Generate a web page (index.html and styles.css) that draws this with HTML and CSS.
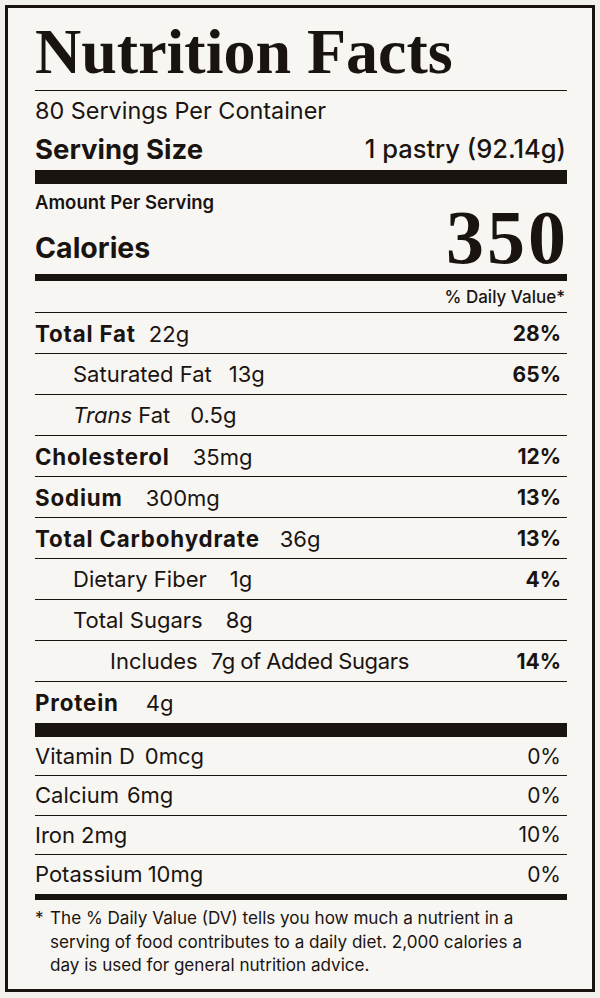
FILE: index.html
```html
<!DOCTYPE html>
<html lang="en">
<head>
<meta charset="utf-8">
<title>Nutrition Facts</title>
<link rel="stylesheet" href="styles.css">
</head>
<body>
<div class="label">
  <h1 class="title">Nutrition Facts</h1>
  <div class="servings">80 Servings Per Container</div>
  <div class="size"><span class="size-label">Serving Size</span><span class="size-value">1 pastry (92.14g)</span></div>
  <div class="calblock">
    <div class="calleft">
      <div class="amount">Amount Per Serving</div>
      <div class="calories">Calories</div>
    </div>
    <div class="calnum">350</div>
  </div>
  <div class="dvhead">% Daily Value*</div>

  <div class="row"><span class="name"><b>Total Fat</b><span class="amt gap-s">22g</span></span><b class="pct">28%</b></div>
  <div class="row sub"><span class="name">Saturated Fat<span class="amt gap-s2">13g</span></span><b class="pct">65%</b></div>
  <div class="row sub"><span class="name"><i>Trans</i>&nbsp;Fat<span class="amt gap-m">0.5g</span></span></div>
  <div class="row"><span class="name"><b>Cholesterol</b><span class="amt gap-l">35mg</span></span><b class="pct">12%</b></div>
  <div class="row"><span class="name"><b>Sodium</b><span class="amt gap-l">300mg</span></span><b class="pct">13%</b></div>
  <div class="row"><span class="name"><b>Total Carbohydrate</b><span class="amt gap-m">36g</span></span><b class="pct">13%</b></div>
  <div class="row sub"><span class="name">Dietary Fiber<span class="amt gap-l">1g</span></span><b class="pct">4%</b></div>
  <div class="row sub"><span class="name">Total Sugars<span class="amt gap-l">8g</span></span></div>
  <div class="row subsub"><span class="name">Includes<span class="amt gap-s tight">7g of Added Sugars</span></span><b class="pct">14%</b></div>
  <div class="row protein"><span class="name"><b>Protein</b><span class="amt gap-xl">4g</span></span></div>

  <div class="row vit"><span class="name">Vitamin D<span class="amt gap-xs">0mcg</span></span><span class="pct">0%</span></div>
  <div class="row vit"><span class="name">Calcium<span class="amt gap-sm">6mg</span></span><span class="pct">0%</span></div>
  <div class="row vit"><span class="name">Iron<span class="amt gap-xxs">2mg</span></span><span class="pct">10%</span></div>
  <div class="row vit last"><span class="name">Potassium<span class="amt gap-xxxs">10mg</span></span><span class="pct">0%</span></div>

  <div class="foot">
    <span class="star">*</span>
    <p class="foottext">The % Daily Value (DV) tells you how much a nutrient in a serving of food contributes to a daily diet. 2,000 calories a day is used for general nutrition advice.</p>
  </div>
</div>
</body>
</html>
```

FILE: styles.css
```css
* { box-sizing: border-box; }

html, body {
  margin: 0;
  padding: 0;
  background: #f3f1ed;
}

body {
  padding: 5px;
  color: #1a1411;
  font-family: Inter, "Noto Sans", sans-serif;
}

.label {
  width: 590px;
  height: 987px;
  border: 3px solid #1a1411;
  background: #f8f6f2;
  padding: 0 25px 0 27px;
  display: flex;
  flex-direction: column;
}

.title {
  margin: 0;
  padding: 12px 0 6px;
  font-family: "Liberation Serif", "Times New Roman", serif;
  font-weight: 700;
  font-size: 64px;
  line-height: 64px;
  border-bottom: 1px solid #1a1411;
}

.servings {
  height: 38px;
  display: flex;
  align-items: center;
  font-size: 23.4px;
  font-weight: 400;
}

.size {
  height: 55px;
  display: flex;
  justify-content: space-between;
  align-items: center;
  padding-bottom: 2px;
  border-bottom: 14px solid #1a1411;
}

.size-label {
  font-size: 27.5px;
  font-weight: 700;
}

.size-value {
  font-size: 25.5px;
  font-weight: 500;
  padding-right: 1px;
}

.calblock {
  height: 97px;
  display: flex;
  justify-content: space-between;
  align-items: flex-end;
  border-bottom: 7px solid #1a1411;
}

.calleft {
  display: flex;
  flex-direction: column;
}

.amount {
  height: 36px;
  display: flex;
  align-items: center;
  font-size: 18.5px;
  font-weight: 600;
}

.calories {
  height: 54px;
  display: flex;
  align-items: center;
  font-size: 28.5px;
  font-weight: 700;
}

.calnum {
  font-family: "Liberation Serif", "Times New Roman", serif;
  font-weight: 700;
  font-size: 76px;
  line-height: 60px;
  padding-bottom: 7px;
  letter-spacing: 3px;
  margin-right: -2px;
}

.dvhead {
  height: 32px;
  display: flex;
  justify-content: flex-end;
  align-items: center;
  padding-right: 2px;
  border-bottom: 1px solid #1a1411;
  font-size: 17px;
  font-weight: 500;
}

.row {
  height: 41px;
  display: flex;
  justify-content: space-between;
  align-items: center;
  border-bottom: 1px solid #1a1411;
  font-size: 22px;
}

.row b {
  font-weight: 700;
  font-size: 22.3px;
  letter-spacing: 0.85px;
}

.row .pct {
  font-size: 21px;
  letter-spacing: 0;
}

.name { display: flex; align-items: baseline; }

.amt { font-weight: 400; }
.tight { letter-spacing: -0.35px; word-spacing: -0.5px; }
.gap-xxxs { margin-left: 5px; }
.gap-xxs { margin-left: 6px; }
.gap-sm { margin-left: 8px; }
.gap-xs { margin-left: 10px; }
.gap-s { margin-left: 13px; }
.gap-s2 { margin-left: 17px; }
.gap-m { margin-left: 20px; }
.gap-l { margin-left: 23px; }
.gap-xl { margin-left: 27px; }

.pct { padding-right: 6px; }

.sub { padding-left: 38px; }
.subsub { padding-left: 75px; }

.protein {
  height: 55px;
  border-bottom: 14px solid #1a1411;
}

.vit { height: 39.25px; }
.vit .pct { padding-right: 6px; }

.vit.last {
  height: 45.25px;
  border-bottom: 6px solid #1a1411;
}

.foot {
  display: flex;
  padding-top: 6px;
  font-size: 17.1px;
  line-height: 23.5px;
}

.star {
  width: 15px;
  flex: none;
}

.foottext {
  margin: 0;
  width: 478px;
}
```
